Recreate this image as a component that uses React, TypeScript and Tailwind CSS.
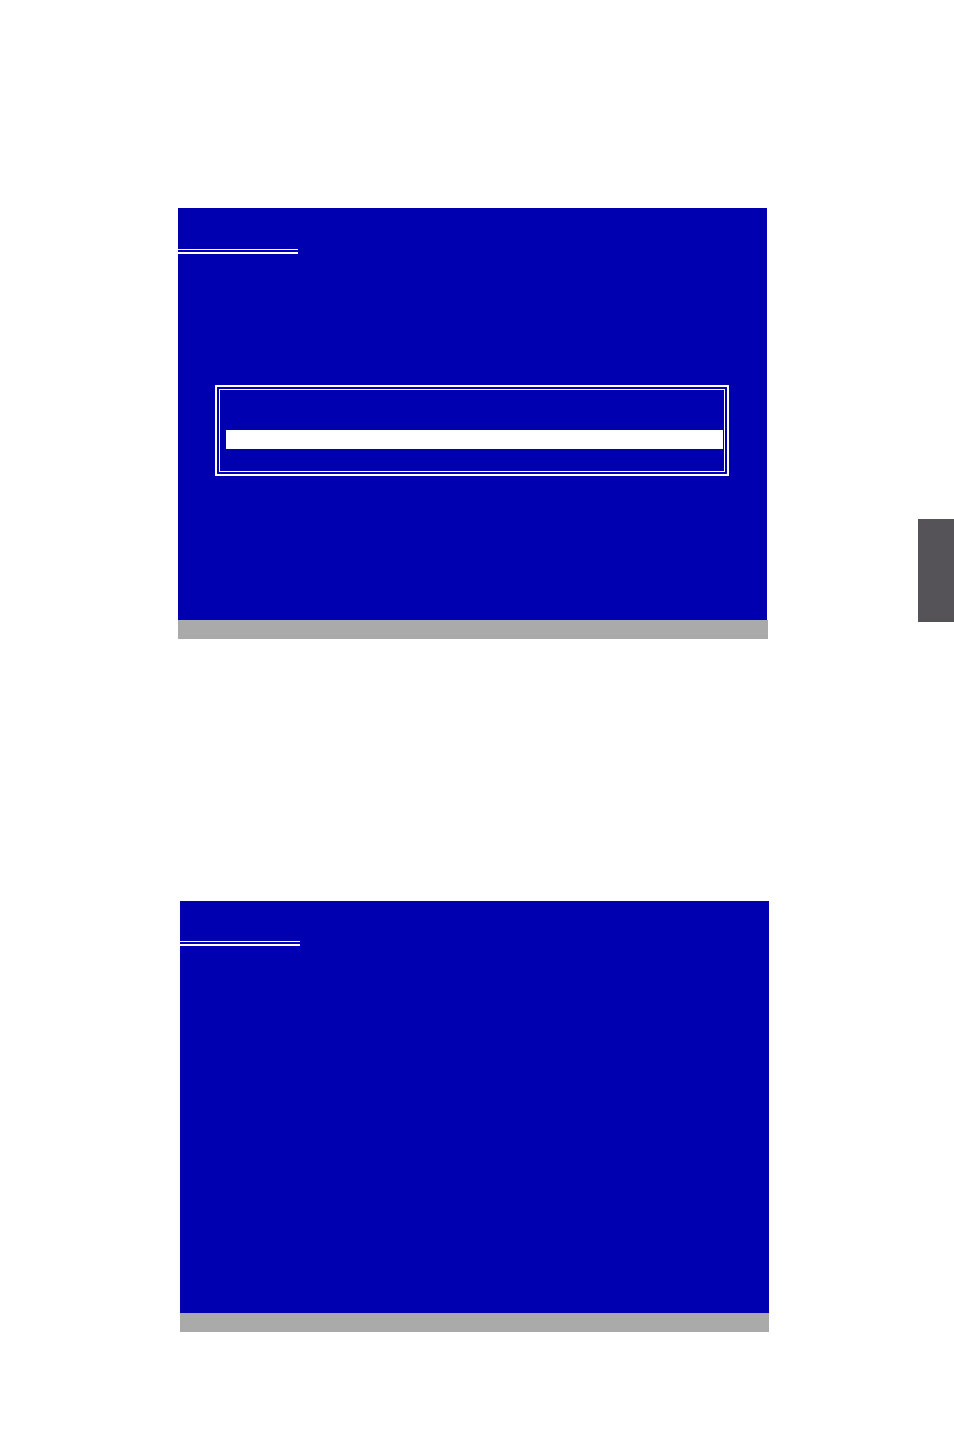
export default function App() {
  return (
    <div className="relative w-[954px] h-[1452px] bg-white overflow-hidden">
      {/* Chapter tab on the right edge */}
      <div className="absolute left-[918px] top-[519px] w-[36px] h-[103px] bg-[#555358]" />

      <div className="pt-[208px]">
        {/* Screen 1: title underline + selection dialog */}
        <div className="ml-[178px] w-[590px]">
          <div className="h-[412px] w-[589px] bg-[#0000b0] pt-[41px]">
            <div className="w-[120px] h-px bg-white" />
            <div className="w-[120px] h-[2px] bg-white mt-[2px]" />
            <div className="ml-[37px] mt-[131px] w-[514px] h-[91px] border-2 border-white p-[2px]">
              <div className="h-full border border-white pt-[40px]">
                <div className="ml-[6px] w-[497px] h-[19px] bg-white" />
              </div>
            </div>
          </div>
          <div className="h-[19px] bg-[#aaaaaa]" />
        </div>

        {/* Screen 2: empty blue screen with title underline */}
        <div className="ml-[180px] mt-[262px] w-[589px]">
          <div className="h-[412px] bg-[#0000b0] pt-[40px]">
            <div className="w-[120px] h-px bg-white" />
            <div className="w-[120px] h-[2px] bg-white mt-[2px]" />
          </div>
          <div className="h-[19px] bg-[#aaaaaa]" />
        </div>
      </div>
    </div>
  );
}
